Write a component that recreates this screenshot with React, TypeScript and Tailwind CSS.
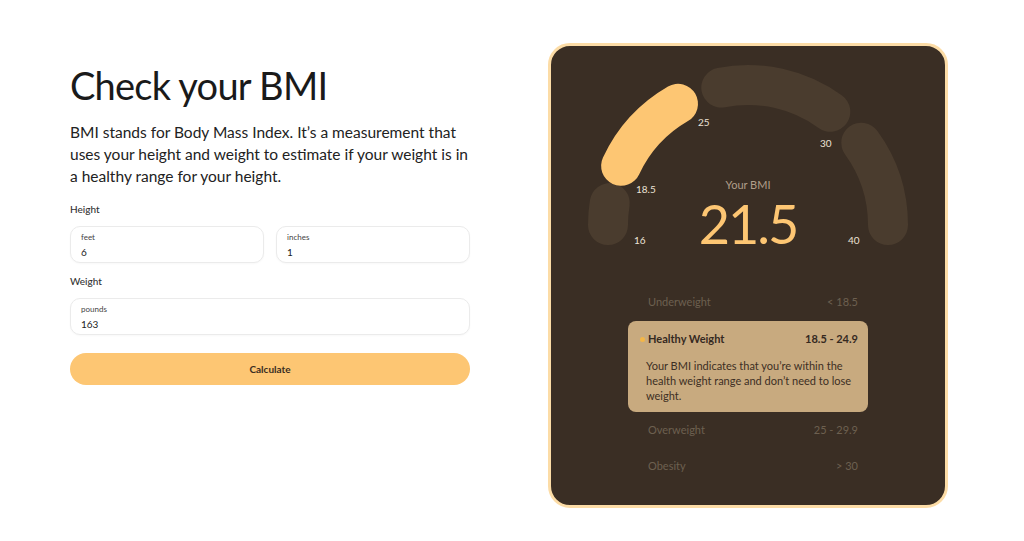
import React from "react";

const FONT = { fontFamily: "Lato, 'Noto Sans', sans-serif" };

const C = 200;
const CY = 182;
const R = 140;
function pt(deg: number) {
  const r = (deg * Math.PI) / 180;
  return [C + R * Math.cos(r), CY - R * Math.sin(r)];
}
function arc(a: number, b: number) {
  const [x1, y1] = pt(a);
  const [x2, y2] = pt(b);
  return `M ${x1.toFixed(2)} ${y1.toFixed(2)} A ${R} ${R} 0 0 1 ${x2.toFixed(2)} ${y2.toFixed(2)}`;
}

function Gauge() {
  const segs: [number, number, string][] = [
    [180, 171, "#4a3c2e"],
    [155, 120, "#fdc673"],
    [101, 54, "#4a3c2e"],
    [36, 0, "#4a3c2e"],
  ];
  const labels: [string, number, number][] = [
    ["16", 86, 197],
    ["18.5", 88, 146],
    ["25", 150, 79],
    ["30", 272, 100],
    ["40", 300, 197],
  ];
  return (
    <svg width="400" height="241" viewBox="0 0 400 241" className="block">
      {segs.map(([a, b, col], i) => (
        <path key={i} d={arc(a, b)} stroke={col} strokeWidth={40} strokeLinecap="round" fill="none" />
      ))}
      {labels.map(([t, x, y]) => (
        <text key={t} x={x} y={y} dominantBaseline="central" fontSize="10" fill="#ece2d6" style={FONT}>
          {t}
        </text>
      ))}
      <text x={200} y={141} textAnchor="middle" dominantBaseline="central" fontSize="11" fill="#b09e8a" style={FONT}>
        Your BMI
      </text>
      <text
        x={200}
        y={180}
        textAnchor="middle"
        dominantBaseline="central"
        fontSize="54"
        fill="#fdc673"
        style={{ ...FONT, letterSpacing: "-2px" }}
      >
        21.5
      </text>
    </svg>
  );
}

function Input({ label, value }: { label: string; value: string }) {
  return (
    <div className="flex-1 h-[37px] rounded-[10px] border border-[#ebebeb] bg-white px-[10px] flex flex-col justify-center shadow-[0_1px_2px_rgba(0,0,0,0.03)]">
      <div className="text-[8px] leading-[12px] text-[#444]">{label}</div>
      <div className="text-[10px] leading-[14px] text-[#222] mt-[2px]">{value}</div>
    </div>
  );
}

export default function App() {
  return (
    <div className="w-[1024px] h-[541px] bg-white flex pl-[70px] pt-[43px] gap-[78px]" style={FONT}>
      <div className="w-[400px] flex flex-col">
        <h1 className="text-[38px] leading-[40px] tracking-[-0.02em] text-[#1a1a1a] mt-[22px]">Check your BMI</h1>
        <p className="text-[15.5px] leading-[22px] text-[#222] mt-[16px]">
          BMI stands for Body Mass Index. It’s a measurement that uses your height and weight to estimate if your weight is in a healthy range for your height.
        </p>
        <div className="text-[10px] leading-[14px] text-[#333] mt-[15px] font-medium">Height</div>
        <div className="flex gap-[12px] mt-[10px]">
          <Input label="feet" value="6" />
          <Input label="inches" value="1" />
        </div>
        <div className="text-[10px] leading-[14px] text-[#333] mt-[11px] font-medium">Weight</div>
        <div className="flex mt-[10px]">
          <Input label="pounds" value="163" />
        </div>
        <button className="mt-[18px] h-[32px] w-full rounded-full bg-[#fdc673] text-[10px] font-bold text-[#3a2d22]">
          Calculate
        </button>
      </div>
      <div className="w-[400px] h-[465px] rounded-[22px] bg-[#3a2e24] border-[3px] border-[#fcdca6] flex flex-col overflow-hidden">
        <div className="-mt-[3px] -ml-[3px]">
          <Gauge />
        </div>
        <div className="mx-[77px] flex flex-col text-[11px]">
          <div className="h-[36px] flex items-center justify-between pl-[20px] pr-[10px] text-[#6d6050]">
            <span>Underweight</span>
            <span>&lt; 18.5</span>
          </div>
          <div className="mt-[1px] h-[91px] rounded-[8px] bg-[#c8aa7f] pl-[18px] pr-[10px] pt-[11px] text-[#35291f]">
            <div className="h-[15px] flex items-center justify-between font-bold relative">
              <span className="absolute -left-[6px] top-[5px] w-[5px] h-[5px] rounded-full bg-[#f3b648]" />
              <span className="pl-[2px]">Healthy Weight</span>
              <span>18.5 - 24.9</span>
            </div>
            <p className="mt-[11px] leading-[15px] text-[#3d2f24]">
              Your BMI indicates that you’re within the health weight range and don’t need to lose weight.
            </p>
          </div>
          <div className="h-[36px] flex items-center justify-between pl-[20px] pr-[10px] text-[#6d6050]">
            <span>Overweight</span>
            <span>25 - 29.9</span>
          </div>
          <div className="h-[36px] flex items-center justify-between pl-[20px] pr-[10px] text-[#6d6050]">
            <span>Obesity</span>
            <span>&gt; 30</span>
          </div>
        </div>
      </div>
    </div>
  );
}
